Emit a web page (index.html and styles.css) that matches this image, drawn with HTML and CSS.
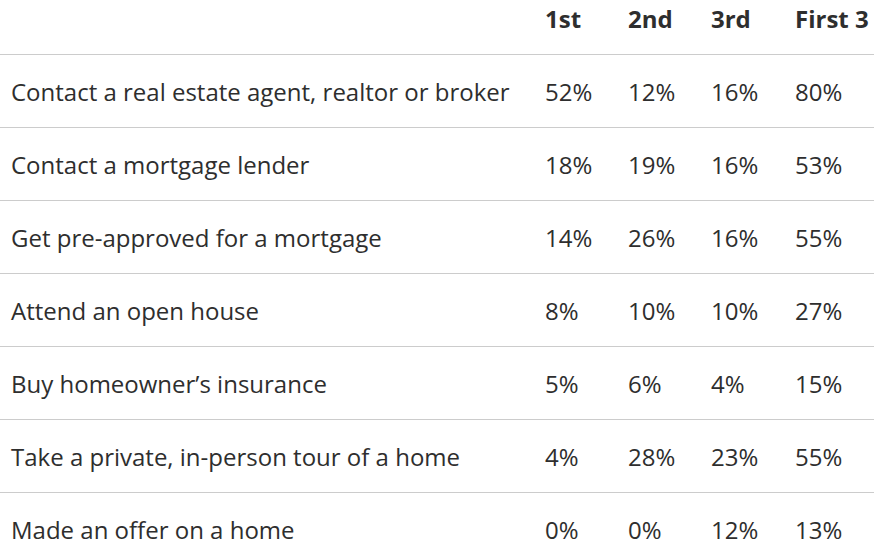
FILE: index.html
```html
<!DOCTYPE html>
<html>
<head>
<meta charset="utf-8">
<link rel="stylesheet" href="styles.css">
</head>
<body>
<table class="data">
  <colgroup>
    <col class="c-label">
    <col class="c-num">
    <col class="c-num">
    <col class="c-num2">
    <col class="c-last">
  </colgroup>
  <thead>
    <tr><th></th><th>1st</th><th>2nd</th><th>3rd</th><th>First 3</th></tr>
  </thead>
  <tbody>
    <tr><td>Contact a real estate agent, realtor or broker</td><td>52%</td><td>12%</td><td>16%</td><td>80%</td></tr>
    <tr><td>Contact a mortgage lender</td><td>18%</td><td>19%</td><td>16%</td><td>53%</td></tr>
    <tr><td>Get pre-approved for a mortgage</td><td>14%</td><td>26%</td><td>16%</td><td>55%</td></tr>
    <tr><td>Attend an open house</td><td>8%</td><td>10%</td><td>10%</td><td>27%</td></tr>
    <tr><td>Buy homeowner’s insurance</td><td>5%</td><td>6%</td><td>4%</td><td>15%</td></tr>
    <tr><td>Take a private, in-person tour of a home</td><td>4%</td><td>28%</td><td>23%</td><td>55%</td></tr>
    <tr><td>Made an offer on a home</td><td>0%</td><td>0%</td><td>12%</td><td>13%</td></tr>
  </tbody>
</table>
</body>
</html>
```
FILE: styles.css
```css
html, body {
  margin: 0;
  padding: 0;
  background: #ffffff;
  overflow: hidden;
}
.data {
  border-collapse: collapse;
  table-layout: fixed;
  width: 884px;
  font-family: "Open Sans", "Liberation Sans", sans-serif;
  font-size: 24px;
  line-height: 33px;
  color: #2e2e2e;
}
.c-label { width: 535px; }
.c-num { width: 83px; }
.c-num2 { width: 84px; }
.c-last { width: 99px; }
.data th, .data td {
  text-align: left;
  padding: 0 10px;
  white-space: nowrap;
  vertical-align: middle;
}
.data th {
  font-weight: 700;
  height: 33px;
  padding-top: 2px;
  padding-bottom: 19px;
  vertical-align: top;
  border-bottom: 1px solid #cccccc;
}
.data td {
  height: 72px;
  border-bottom: 1px solid #cccccc;
}
.data td:first-child, .data th:first-child {
  padding-left: 11px;
}
```
